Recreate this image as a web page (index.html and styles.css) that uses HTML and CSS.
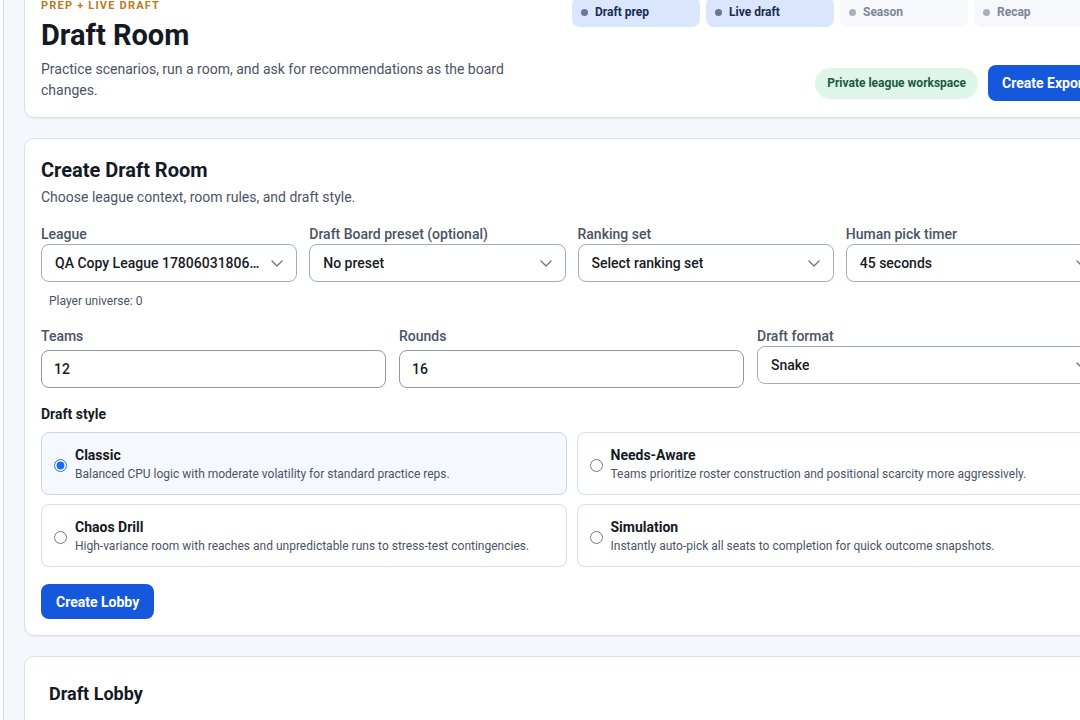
FILE: index.html
```html
<!DOCTYPE html>
<html lang="en">
<head>
    <meta charset="UTF-8">
    <meta name="viewport" content="width=device-width, initial-scale=1.0">
    <title>Draft Room</title>
    <link rel="stylesheet" href="styles.css">
</head>
<body>
    <div class="shell">
        <aside class="sidebar"></aside>
        <main class="main">
            <section class="card page-header">
                <div class="intro">
                    <div class="eyebrow">Prep + Live Draft</div>
                    <h1>Draft Room</h1>
                    <p class="lead">Practice scenarios, run a room, and ask for recommendations as the board changes.</p>
                </div>
                <div class="header-side">
                    <nav class="phase-tabs">
                        <span class="phase active"><i class="dot"></i>Draft prep</span>
                        <span class="phase active"><i class="dot"></i>Live draft</span>
                        <span class="phase"><i class="dot"></i>Season</span>
                        <span class="phase"><i class="dot"></i>Recap</span>
                    </nav>
                    <div class="header-actions">
                        <span class="badge">Private league workspace</span>
                        <button class="btn export-btn">Create Export</button>
                    </div>
                </div>
            </section>

            <section class="card">
                <h2>Create Draft Room</h2>
                <p class="sub">Choose league context, room rules, and draft style.</p>

                <div class="grid-4">
                    <div class="field">
                        <label>League</label>
                        <div class="select">
                            <span class="value">QA Copy League 1780603180642</span>
                            <svg class="chev" width="12" height="7" viewBox="0 0 12 7"><path d="M1 1l5 5 5-5" fill="none" stroke="#6b7280" stroke-width="1.3" stroke-linecap="round" stroke-linejoin="round"/></svg>
                        </div>
                        <div class="hint">Player universe: 0</div>
                    </div>
                    <div class="field">
                        <label>Draft Board preset (optional)</label>
                        <div class="select">
                            <span class="value">No preset</span>
                            <svg class="chev" width="12" height="7" viewBox="0 0 12 7"><path d="M1 1l5 5 5-5" fill="none" stroke="#6b7280" stroke-width="1.3" stroke-linecap="round" stroke-linejoin="round"/></svg>
                        </div>
                    </div>
                    <div class="field">
                        <label>Ranking set</label>
                        <div class="select">
                            <span class="value">Select ranking set</span>
                            <svg class="chev" width="12" height="7" viewBox="0 0 12 7"><path d="M1 1l5 5 5-5" fill="none" stroke="#6b7280" stroke-width="1.3" stroke-linecap="round" stroke-linejoin="round"/></svg>
                        </div>
                    </div>
                    <div class="field">
                        <label>Human pick timer</label>
                        <div class="select">
                            <span class="value">45 seconds</span>
                            <svg class="chev" width="12" height="7" viewBox="0 0 12 7"><path d="M1 1l5 5 5-5" fill="none" stroke="#6b7280" stroke-width="1.3" stroke-linecap="round" stroke-linejoin="round"/></svg>
                        </div>
                    </div>
                </div>

                <div class="grid-3">
                    <div class="field">
                        <label>Teams</label>
                        <input class="input" type="text" value="12">
                    </div>
                    <div class="field">
                        <label>Rounds</label>
                        <input class="input" type="text" value="16">
                    </div>
                    <div class="field">
                        <label>Draft format</label>
                        <div class="select">
                            <span class="value">Snake</span>
                            <svg class="chev" width="12" height="7" viewBox="0 0 12 7"><path d="M1 1l5 5 5-5" fill="none" stroke="#6b7280" stroke-width="1.3" stroke-linecap="round" stroke-linejoin="round"/></svg>
                        </div>
                    </div>
                </div>

                <div class="style-label">Draft style</div>
                <div class="styles">
                    <label class="style-option selected">
                        <input type="radio" name="style" checked>
                        <span class="style-text">
                            <strong>Classic</strong>
                            <small>Balanced CPU logic with moderate volatility for standard practice reps.</small>
                        </span>
                    </label>
                    <label class="style-option">
                        <input type="radio" name="style">
                        <span class="style-text">
                            <strong>Needs-Aware</strong>
                            <small>Teams prioritize roster construction and positional scarcity more aggressively.</small>
                        </span>
                    </label>
                    <label class="style-option">
                        <input type="radio" name="style">
                        <span class="style-text">
                            <strong>Chaos Drill</strong>
                            <small>High-variance room with reaches and unpredictable runs to stress-test contingencies.</small>
                        </span>
                    </label>
                    <label class="style-option">
                        <input type="radio" name="style">
                        <span class="style-text">
                            <strong>Simulation</strong>
                            <small>Instantly auto-pick all seats to completion for quick outcome snapshots.</small>
                        </span>
                    </label>
                </div>

                <button class="btn lobby-btn">Create Lobby</button>
            </section>

            <section class="card lobby">
                <h3>Draft Lobby</h3>
            </section>
        </main>
    </div>
</body>
</html>
```

FILE: styles.css
```css
* {
    box-sizing: border-box;
}
body {
    margin: 0;
    font-family: Roboto, "Liberation Sans", Arial, sans-serif;
    background-color: #f4f7fc;
    color: #171c26;
    overflow: hidden;
}
.shell {
    display: flex;
    align-items: flex-start;
    height: 720px;
}
.sidebar {
    flex: none;
    width: 4px;
    height: 100%;
    background-color: #fbfcfe;
    border-right: 1px solid #d3dae6;
}
.main {
    flex: none;
    width: 1095px;
    margin-left: 20px;
    margin-top: -20px;
    display: flex;
    flex-direction: column;
    gap: 20px;
}
.card {
    background-color: #fff;
    border: 1px solid #d8dfea;
    border-radius: 10px;
    box-shadow: 0 1px 2px rgba(30, 45, 70, 0.06);
    padding: 16px;
}

/* header */
.page-header {
    display: flex;
    justify-content: space-between;
}
.intro {
    width: 520px;
}
.eyebrow {
    margin-top: 2px;
    font-size: 11px;
    line-height: 14px;
    font-weight: 700;
    letter-spacing: 1.2px;
    text-transform: uppercase;
    color: #bb7a24;
}
h1 {
    margin: 4px 0 0;
    font-size: 29px;
    line-height: 36px;
    font-weight: 700;
    color: #141a24;
}
.lead {
    margin: 6px 0 0;
    font-size: 14px;
    line-height: 21px;
    color: #4a5465;
}
.header-side {
    display: flex;
    flex-direction: column;
    justify-content: space-between;
    align-items: flex-end;
}
.phase-tabs {
    display: flex;
    gap: 6px;
}
.phase {
    width: 128px;
    height: 30px;
    display: flex;
    align-items: center;
    gap: 7px;
    padding-left: 9px;
    border-radius: 8px;
    background-color: #f6f8fc;
    color: #7d8697;
    font-size: 12px;
    font-weight: 700;
}
.phase .dot {
    width: 7px;
    height: 7px;
    border-radius: 50%;
    background-color: #a9b0bd;
}
.phase.active {
    background-color: #dae6fb;
    color: #1c2c52;
}
.phase.active .dot {
    background-color: #69789a;
}
.header-actions {
    display: flex;
    align-items: center;
    gap: 10px;
}
.badge {
    height: 31px;
    display: flex;
    align-items: center;
    padding: 0 12px;
    border-radius: 16px;
    background-color: #def5ea;
    color: #1c5a3f;
    font-size: 12px;
    font-weight: 700;
}
.btn {
    height: 36px;
    padding: 0 15px;
    border: none;
    border-radius: 8px;
    background-color: #1658db;
    color: #fff;
    font-family: inherit;
    font-size: 14px;
    font-weight: 700;
}
.export-btn {
    padding: 0 14px;
}

/* create room form */
h2 {
    margin: 1px 0 0;
    font-size: 20px;
    line-height: 28px;
    font-weight: 700;
    color: #141a24;
}
.sub {
    margin: 3px 0 0;
    font-size: 14px;
    line-height: 21px;
    color: #4a5465;
}
.grid-4 {
    display: grid;
    grid-template-columns: repeat(4, minmax(0, 1fr));
    gap: 12px;
    margin-top: 16px;
}
.grid-3 {
    display: grid;
    grid-template-columns: repeat(3, minmax(0, 1fr));
    gap: 13px;
    margin-top: 18px;
}
.field label {
    display: block;
    font-size: 14px;
    line-height: 20px;
    font-weight: 500;
    color: #4a5465;
}
.select {
    height: 38px;
    display: flex;
    align-items: center;
    justify-content: space-between;
    gap: 10px;
    padding: 0 13px;
    border: 1px solid #a3acba;
    border-radius: 8px;
    background-color: #fff;
    font-size: 14px;
    font-weight: 500;
    color: #171c26;
}
.select .value {
    white-space: nowrap;
    overflow: hidden;
    text-overflow: ellipsis;
}
.chev {
    flex: none;
}
.hint {
    margin: 12px 0 0 8px;
    font-size: 12px;
    line-height: 14px;
    color: #4a5465;
}
.input {
    display: block;
    width: 100%;
    height: 38px;
    margin-top: 4px;
    padding: 0 12px;
    border: 1px solid #8f98a7;
    border-radius: 8px;
    font-family: inherit;
    font-size: 14px;
    font-weight: 500;
    color: #171c26;
    outline: none;
}
.style-label {
    margin-top: 16px;
    font-size: 14px;
    line-height: 20px;
    font-weight: 700;
    color: #171c26;
}
.styles {
    display: grid;
    grid-template-columns: 1fr 1fr;
    column-gap: 10px;
    row-gap: 9px;
    margin-top: 8px;
}
.style-option {
    height: 63px;
    display: flex;
    align-items: center;
    gap: 8px;
    padding: 0 12px;
    border: 1px solid #d6dde8;
    border-radius: 8px;
    background-color: #fff;
}
.style-option.selected {
    background-color: #f5f8fe;
    border-color: #ccd5e3;
}
.style-option input {
    margin: 3px 0 0;
    width: 13px;
    height: 13px;
    accent-color: #1a6ef2;
}
.style-text {
    display: flex;
    flex-direction: column;
    gap: 1px;
}
.style-text strong {
    font-size: 14px;
    line-height: 20px;
    font-weight: 700;
    color: #141a24;
}
.style-text small {
    font-size: 12px;
    line-height: 17px;
    color: #4a5465;
}
.lobby-btn {
    margin-top: 17px;
    height: 35px;
}

/* lobby */
.lobby {
    padding: 24px;
    height: 120px;
}
h3 {
    margin: 0;
    font-size: 18px;
    line-height: 26px;
    font-weight: 700;
    color: #141a24;
}
```
